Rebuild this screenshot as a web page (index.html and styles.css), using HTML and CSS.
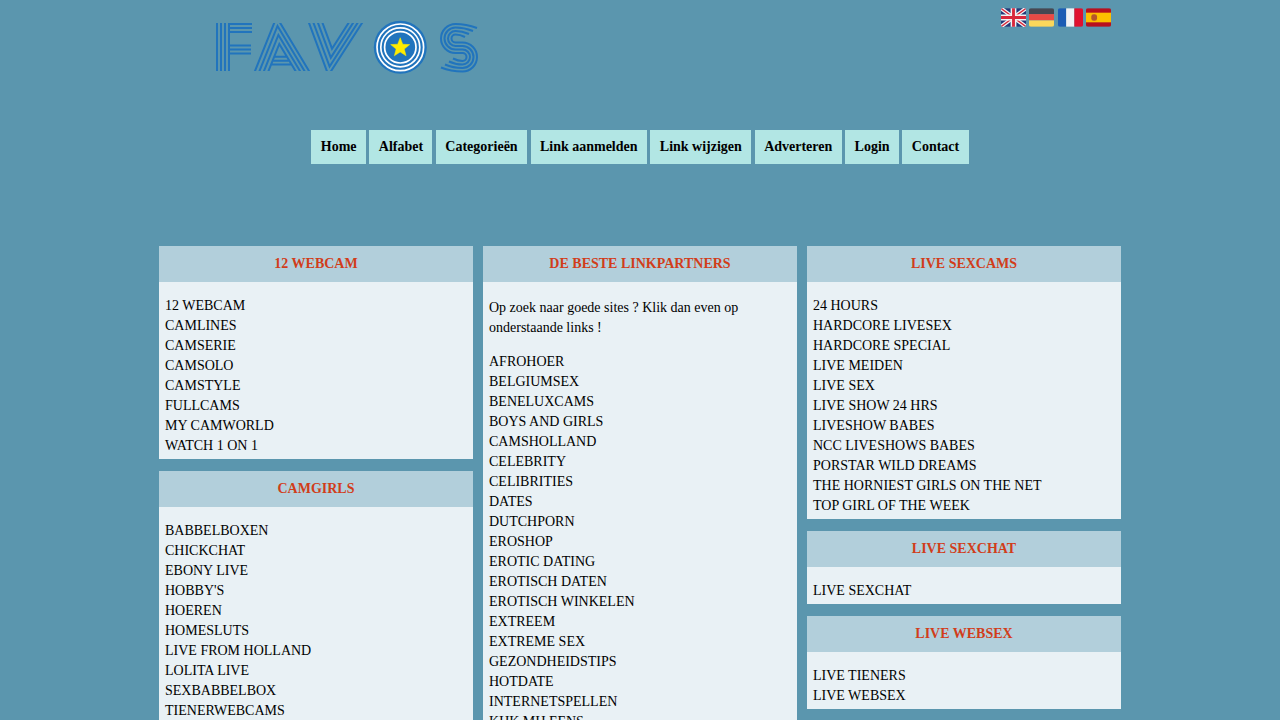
FILE: index.html
```html
<!DOCTYPE html>
<html lang="nl">
<head>
<meta charset="utf-8">
<title>Favos</title>
<link rel="stylesheet" href="styles.css">
</head>
<body>
<div class="page">
<header class="header">
  <svg class="logo" width="264" height="56" viewBox="216 19 264 56" aria-label="Favos">
    <defs>
      <clipPath id="band"><rect x="216" y="23" width="264" height="48"/></clipPath>
    </defs>
    <g class="ln" clip-path="url(#band)">
      <path d="M217 21V73M221 21V73M225 21V73M229 21V73M229 24H252M229 28H252M229 32H252M229 45.5H251M229 49.5H251M229 53.5H251"/>
      <path d="M254.2 73L276.6 17L310.2 73M258.7 73L277.5 26L305.7 73M263.2 73L278.4 35L301.2 73M267.7 73L279.3 44L296.7 73M274.2 56.7H286.9M272.6 60.7H289.3M271.1 64.5H291.6"/>
      <path d="M308.3 21L328.4 75.2L363.3 21M312.8 21L329.6 66.6L358.8 21M317.3 21L330.8 57.65L354.3 21M321.8 21L332 48.7L349.8 21"/>
    </g>
    <g class="ln">
      <path d="M477 28Q466 24 455.5 24A14.5 14.5 0 0 0 455.5 53H462.5A4 4 0 0 1 462.5 61Q458 61 453 58.5"/>
      <path d="M473 31Q464 27.5 455.5 27.5A11 11 0 0 0 455.5 49.5H462.5A7.500 7.500 0 0 1 462.500 64.500Q455 64.500 449 61.500"/>
      <path d="M469 34Q462 31 455.5 31A7.500 7.500 0 0 0 455.5 46H462.500A11 11 0 0 1 462.500 68Q453 68 445 64.500"/>
      <path d="M465 37Q460 34.500 455.500 34.500A4 4 0 0 0 455.500 42.500H462.500A14.500 14.500 0 0 1 462.500 71.500Q451 71.500 441 67.500"/>
    </g>
    <circle cx="400.3" cy="47.3" r="26.500" class="disc"/>
    <circle cx="400.3" cy="47.3" r="23.300" class="ring"/>
    <circle cx="400.3" cy="47.3" r="19.500" class="ring"/>
    <circle cx="400.3" cy="47.3" r="15.700" class="ring"/>
    <path class="star" d="M400.2 37.7L402.73 44.22 409.71 44.61 404.29 49.03 406.08 55.79 400.2 52 394.32 55.79 396.11 49.03 390.69 44.61 397.67 44.22Z"/>
  </svg>
  <div class="flags">
    <svg class="flag" viewBox="0 0 26 19">
      <rect width="26" height="19" fill="#243a7a"/>
      <path d="M0 0L26 19M26 0L0 19" stroke="#f2f2f2" stroke-width="4"/>
      <path d="M0 0L26 19M26 0L0 19" stroke="#d8283c" stroke-width="1.4"/>
      <path d="M13 0V19M0 9.500H26" stroke="#f2f2f2" stroke-width="6"/>
      <path d="M13 0V19M0 9.500H26" stroke="#d8283c" stroke-width="3"/>
    </svg>
    <svg class="flag" viewBox="0 0 26 19">
      <rect width="26" height="6" fill="#464852"/>
      <rect y="6" width="26" height="6.500" fill="#e94a45"/>
      <rect y="12.500" width="26" height="6.500" fill="#fbd75b"/>
    </svg>
    <svg class="flag" viewBox="0 0 26 19">
      <rect width="8.500" height="19" fill="#1c5cb4"/>
      <rect x="8.500" width="8.500" height="19" fill="#f1f1f4"/>
      <rect x="17" width="9" height="19" fill="#e0102e"/>
    </svg>
    <svg class="flag" viewBox="0 0 26 19">
      <rect width="26" height="19" fill="#b8101e"/>
      <rect y="4.500" width="26" height="10" fill="#fdc000"/>
      <rect x="5.500" y="6" width="6" height="7" rx="2.500" fill="#b5562a"/>
    </svg>
  </div>
</header>
<nav class="nav">
  <ul class="menu">
    <li><a href="#">Home</a></li>
    <li><a href="#">Alfabet</a></li>
    <li><a href="#">Categorieën</a></li>
    <li><a href="#">Link aanmelden</a></li>
    <li><a href="#">Link wijzigen</a></li>
    <li><a href="#">Adverteren</a></li>
    <li><a href="#">Login</a></li>
    <li><a href="#">Contact</a></li>
  </ul>
</nav>
<main class="columns">
  <div class="col">
    <section class="box">
      <h2>12 WEBCAM</h2>
      <ul>
        <li>12 WEBCAM</li><li>CAMLINES</li><li>CAMSERIE</li><li>CAMSOLO</li><li>CAMSTYLE</li><li>FULLCAMS</li><li>MY CAMWORLD</li><li>WATCH 1 ON 1</li>
      </ul>
    </section>
    <section class="box">
      <h2>CAMGIRLS</h2>
      <ul>
        <li>BABBELBOXEN</li><li>CHICKCHAT</li><li>EBONY LIVE</li><li>HOBBY'S</li><li>HOEREN</li><li>HOMESLUTS</li><li>LIVE FROM HOLLAND</li><li>LOLITA LIVE</li><li>SEXBABBELBOX</li><li>TIENERWEBCAMS</li>
      </ul>
    </section>
  </div>
  <div class="col">
    <section class="box">
      <h2>DE BESTE LINKPARTNERS</h2>
      <p>Op zoek naar goede sites ? Klik dan even op onderstaande links !</p>
      <ul class="after-p">
        <li>AFROHOER</li><li>BELGIUMSEX</li><li>BENELUXCAMS</li><li>BOYS AND GIRLS</li><li>CAMSHOLLAND</li><li>CELEBRITY</li><li>CELIBRITIES</li><li>DATES</li><li>DUTCHPORN</li><li>EROSHOP</li><li>EROTIC DATING</li><li>EROTISCH DATEN</li><li>EROTISCH WINKELEN</li><li>EXTREEM</li><li>EXTREME SEX</li><li>GEZONDHEIDSTIPS</li><li>HOTDATE</li><li>INTERNETSPELLEN</li><li>KIJK MIJ EENS</li>
      </ul>
    </section>
  </div>
  <div class="col">
    <section class="box">
      <h2>LIVE SEXCAMS</h2>
      <ul>
        <li>24 HOURS</li><li>HARDCORE LIVESEX</li><li>HARDCORE SPECIAL</li><li>LIVE MEIDEN</li><li>LIVE SEX</li><li>LIVE SHOW 24 HRS</li><li>LIVESHOW BABES</li><li>NCC LIVESHOWS BABES</li><li>PORSTAR WILD DREAMS</li><li>THE HORNIEST GIRLS ON THE NET</li><li>TOP GIRL OF THE WEEK</li>
      </ul>
    </section>
    <section class="box">
      <h2>LIVE SEXCHAT</h2>
      <ul><li>LIVE SEXCHAT</li></ul>
    </section>
    <section class="box">
      <h2>LIVE WEBSEX</h2>
      <ul><li>LIVE TIENERS</li><li>LIVE WEBSEX</li></ul>
    </section>
  </div>
</main>
</div>
</body>
</html>
```
FILE: styles.css
```css
html, body {
  margin: 0;
  padding: 0;
  height: 720px;
  overflow: hidden;
}
body {
  background: #5b96ae;
  font-family: "Liberation Serif", "Times New Roman", serif;
  font-size: 14px;
  color: #000;
}
.page {
  width: 962px;
  margin: 0 auto;
}
.header {
  height: 130px;
  display: flex;
  justify-content: space-between;
  align-items: flex-start;
}
.logo {
  margin: 19px 0 0 57px;
}
.ln path {
  fill: none;
  stroke: #2174bd;
  stroke-width: 2;
}
.disc { fill: #2174bd; }
.ring { fill: none; stroke: #fff; stroke-width: 1.7; }
.star { fill: #ffec00; stroke: #ffec00; stroke-width: 0.5; stroke-linejoin: round; }
.flags {
  display: flex;
  gap: 3.33px;
  margin: 8px 10px 0 0;
}
.flag {
  display: block;
  width: 25px;
  height: 19px;
  border-radius: 2px;
}
.nav {
  height: 116px;
  text-align: center;
}
.menu {
  list-style: none;
  margin: 0;
  padding: 0;
  height: 34px;
}
.menu li {
  display: inline-block;
  background: #b2e6e4;
}
.menu a {
  display: block;
  padding: 0 9.38px;
  line-height: 34px;
  font-weight: bold;
  color: #000;
  text-decoration: none;
}
.columns {
  display: grid;
  grid-template-columns: 314px 314px 314px;
  column-gap: 10px;
  align-items: start;
}
.box {
  background: #e9f1f5;
  margin-bottom: 12px;
}
.box h2 {
  margin: 0;
  height: 36px;
  line-height: 36px;
  background: #b2cfdb;
  color: #d13d1a;
  font-size: 14px;
  font-weight: bold;
  text-align: center;
}
.box ul {
  list-style: none;
  margin: 0;
  padding: 14px 6px 3px;
}
.box li {
  line-height: 20px;
}
.box p {
  margin: 0;
  padding: 16px 6px 0;
  line-height: 20px;
}
.box ul.after-p {
  padding-top: 14px;
}
```
